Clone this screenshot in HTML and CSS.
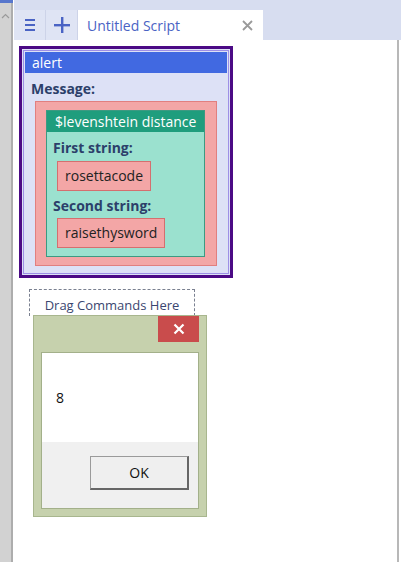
FILE: index.html
```html
<!DOCTYPE html>
<html lang="en">
<head>
    <meta charset="UTF-8">
    <meta name="viewport" content="width=device-width, initial-scale=1.0">
    <title>Untitled Script</title>
    <link rel="stylesheet" href="styles.css">
</head>
<body>
    <div class="app">
        <div class="side-scroll">
            <div class="side-top"></div>
            <svg class="side-arrow" width="9" height="6" viewBox="0 0 9 6"><path d="M1 5 L4.5 1.5 L8 5" fill="none" stroke="#9a9a9a" stroke-width="1.2"/></svg>
        </div>

        <div class="main">
            <div class="tabbar">
                <div class="tab-btn">
                    <svg width="10" height="12" viewBox="0 0 10 12"><rect x="0" y="0" width="10" height="2" fill="#4a63c4"/><rect x="0" y="5" width="10" height="2" fill="#4a63c4"/><rect x="0" y="10" width="10" height="2" fill="#4a63c4"/></svg>
                </div>
                <div class="tab-btn">
                    <svg width="16" height="16" viewBox="0 0 16 16"><rect x="7" y="0" width="2.4" height="16" fill="#4a63c4"/><rect x="0" y="7" width="16" height="2.4" fill="#4a63c4"/></svg>
                </div>
                <div class="tab">
                    <span class="tab-title">Untitled Script</span>
                    <svg class="tab-close" width="11" height="11" viewBox="0 0 11 11"><path d="M1 1 L10 10 M10 1 L1 10" stroke="#9a9a9a" stroke-width="1.8"/></svg>
                </div>
            </div>

            <div class="canvas">
                <!-- alert block -->
                <div class="block-alert">
                    <div class="alert-inner">
                        <div class="alert-head">alert</div>
                        <div class="label msg-label">Message:</div>
                        <div class="slot-pink">
                            <div class="block-func">
                                <div class="func-head">$levenshtein distance</div>
                                <div class="label first">First string:</div>
                                <div class="value">rosettacode</div>
                                <div class="label">Second string:</div>
                                <div class="value">raisethysword</div>
                            </div>
                        </div>
                    </div>
                </div>

                <div class="drop-zone">Drag Commands Here</div>

                <!-- message box -->
                <div class="dialog">
                    <div class="dialog-titlebar">
                        <div class="dialog-close">
                            <svg width="12" height="12" viewBox="0 0 12 12"><path d="M1.5 1.5 L10.5 10.5 M10.5 1.5 L1.5 10.5" stroke="#fff" stroke-width="2.2"/></svg>
                        </div>
                    </div>
                    <div class="dialog-body">
                        <div class="dialog-msg">8</div>
                        <div class="dialog-foot">
                            <div class="ok-btn">OK</div>
                        </div>
                    </div>
                </div>
            </div>
        </div>
    </div>
</body>
</html>
```

FILE: styles.css
```css
body {
    margin: 0;
    font-family: "Open Sans", "Noto Sans", sans-serif;
    background-color: #fff;
}

.app {
    display: flex;
    height: 562px;
}

.side-scroll {
    width: 11px;
    background-color: #d2d2d2;
    border-right: 2px solid #adadad;
    margin-right: 1px;
    display: flex;
    flex-direction: column;
    align-items: center;
}

.side-top {
    width: 13px;
    height: 3px;
    background-color: #5877cc;
    align-self: flex-start;
}

.side-arrow {
    margin-top: 10px;
}

.main {
    flex: 1;
    display: flex;
    flex-direction: column;
}

.tabbar {
    height: 40px;
    background-color: #d7ddf0;
    display: flex;
    align-items: flex-end;
}

.tab-btn {
    width: 31px;
    height: 30px;
    background-color: #dfe4f4;
    border-right: 1px solid #cdd3e8;
    display: flex;
    align-items: center;
    justify-content: center;
}

.tab {
    width: 185px;
    height: 30px;
    background-color: #fff;
    display: flex;
    align-items: center;
    justify-content: space-between;
    padding: 0 10px 0 9px;
    box-sizing: border-box;
}

.tab-title {
    color: #4a63c4;
    font-size: 14px;
}

.canvas {
    flex: 1;
    border-right: 2px solid #b8b8b8;
    margin-right: 2px;
    padding: 6px 0 0 5px;
}

.block-alert {
    width: 206px;
    border: 3px solid #4b0a85;
    padding: 1px;
    background-color: #dde1f6;
}

.alert-inner {
    border: 1px solid #9d8fe6;
    padding: 1px 1px 7px 1px;
}

.alert-head {
    background-color: #4169e1;
    color: #fff;
    font-size: 14px;
    height: 21px;
    line-height: 21px;
    padding-left: 7px;
}

.label {
    font-weight: bold;
    color: #2c3f6a;
    font-size: 14px;
    line-height: 19px;
    padding-left: 6px;
    margin: 5px 0 3px;
}

.msg-label {
    margin: 6px 0 3px;
}

.slot-pink {
    margin: 0 10px;
    background-color: #f3a6a6;
    border: 1px solid #e17f7f;
    padding: 8px 11px 8px 10px;
}

.block-func {
    background-color: #9be1cf;
    border: 1px solid #3c9a82;
    padding-bottom: 8px;
}

.func-head {
    background-color: #1f9d7d;
    color: #fff;
    font-size: 14px;
    height: 21px;
    line-height: 21px;
    padding-left: 8px;
}

.block-func .label.first {
    margin: 6px 0 4px;
}

.value {
    display: inline-block;
    background-color: #f3a6a6;
    border: 1px solid #d46f6f;
    font-size: 14px;
    line-height: 20px;
    color: #222;
    padding: 4px 7px;
    margin-left: 10px;
    vertical-align: top;
}

.drop-zone {
    width: 166px;
    height: 27px;
    margin: 11px 0 0 10px;
    border: 1px dashed #7a8090;
    border-bottom: none;
    color: #3b4670;
    font-size: 13px;
    text-align: center;
    padding-top: 6px;
    box-sizing: border-box;
}

.dialog {
    width: 174px;
    margin: -1px 0 0 14px;
    background-color: #c6d1ad;
    border: 1px solid #a8b68e;
    box-sizing: border-box;
    padding: 0 7px 7px 7px;
    position: relative;
}

.dialog-titlebar {
    height: 36px;
    display: flex;
    justify-content: flex-end;
    align-items: flex-start;
}

.dialog-close {
    width: 41px;
    height: 26px;
    background-color: #c94c4c;
    display: flex;
    align-items: center;
    justify-content: center;
}

.dialog-body {
    border: 1px solid #a3b08a;
    background-color: #fff;
}

.dialog-msg {
    height: 89px;
    font-size: 14px;
    padding-left: 14px;
    line-height: 89px;
    color: #111;
}

.dialog-foot {
    background-color: #f0f0f0;
    height: 66px;
    padding: 14px 0 0 48px;
    box-sizing: border-box;
}

.ok-btn {
    width: 99px;
    height: 34px;
    box-sizing: border-box;
    background-color: #efefef;
    border: 1px solid #9a9a9a;
    border-right: 2px solid #666;
    border-bottom: 2px solid #666;
    text-align: center;
    line-height: 31px;
    font-size: 14px;
    color: #111;
}
```
